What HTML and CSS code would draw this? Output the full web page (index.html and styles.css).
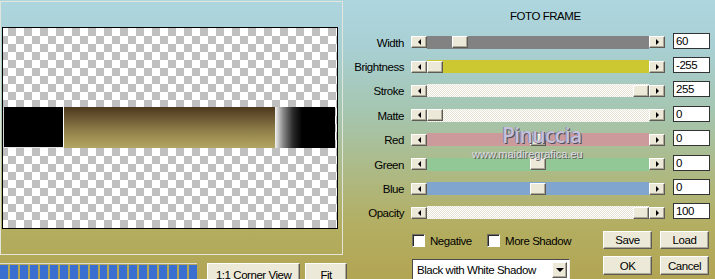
FILE: index.html
```html
<!DOCTYPE html>
<html>
<head>
    <title>Foto Frame</title>
    <link rel="stylesheet" href="styles.css">
</head>
<body>
    <div class="dialog">
        <div class="left">
            <div class="preview-frame">
                <div class="preview">
                    <div class="strip">
                        <div class="strip-black"></div>
                        <div class="strip-brown"></div>
                        <div class="strip-fade"></div>
                    </div>
                </div>
            </div>
            <div class="left-bottom">
                <div class="progress">
                    <span></span><span></span><span></span><span></span><span></span>
                    <span></span><span></span><span></span><span></span><span></span>
                    <span></span><span></span><span></span><span></span><span></span>
                    <span></span><span></span><span></span><span></span><span></span>
                </div>
                <button class="btn corner">1:1 Corner View</button>
                <button class="btn fit">Fit</button>
            </div>
        </div>

        <div class="right">
            <div class="title">FOTO FRAME</div>

            <div class="rows">
                <div class="row">
                    <span class="label">Width</span>
                    <div class="slider">
                        <span class="arrow"><i class="tri-left"></i></span>
                        <span class="track gray"><span class="thumb" style="margin-left:25px"></span></span>
                        <span class="arrow"><i class="tri-right"></i></span>
                    </div>
                    <input class="value" type="text" value="60">
                </div>
                <div class="row">
                    <span class="label">Brightness</span>
                    <div class="slider">
                        <span class="arrow"><i class="tri-left"></i></span>
                        <span class="track yellow"><span class="thumb" style="margin-left:0"></span></span>
                        <span class="arrow"><i class="tri-right"></i></span>
                    </div>
                    <input class="value" type="text" value="-255">
                </div>
                <div class="row">
                    <span class="label">Stroke</span>
                    <div class="slider">
                        <span class="arrow"><i class="tri-left"></i></span>
                        <span class="track light"><span class="thumb" style="margin-left:206px"></span></span>
                        <span class="arrow"><i class="tri-right"></i></span>
                    </div>
                    <input class="value" type="text" value="255">
                </div>
                <div class="row">
                    <span class="label">Matte</span>
                    <div class="slider">
                        <span class="arrow"><i class="tri-left"></i></span>
                        <span class="track light"><span class="thumb" style="margin-left:0"></span></span>
                        <span class="arrow"><i class="tri-right"></i></span>
                    </div>
                    <input class="value" type="text" value="0">
                </div>
                <div class="row">
                    <span class="label">Red</span>
                    <div class="slider">
                        <span class="arrow"><i class="tri-left"></i></span>
                        <span class="track red"><span class="thumb" style="margin-left:103px"></span></span>
                        <span class="arrow"><i class="tri-right"></i></span>
                    </div>
                    <input class="value" type="text" value="0">
                </div>
                <div class="row">
                    <span class="label">Green</span>
                    <div class="slider">
                        <span class="arrow"><i class="tri-left"></i></span>
                        <span class="track green"><span class="thumb" style="margin-left:103px"></span></span>
                        <span class="arrow"><i class="tri-right"></i></span>
                    </div>
                    <input class="value" type="text" value="0">
                </div>
                <div class="row">
                    <span class="label">Blue</span>
                    <div class="slider">
                        <span class="arrow"><i class="tri-left"></i></span>
                        <span class="track blue"><span class="thumb" style="margin-left:103px"></span></span>
                        <span class="arrow"><i class="tri-right"></i></span>
                    </div>
                    <input class="value" type="text" value="0">
                </div>
                <div class="row">
                    <span class="label">Opacity</span>
                    <div class="slider">
                        <span class="arrow"><i class="tri-left"></i></span>
                        <span class="track light"><span class="thumb" style="margin-left:206px"></span></span>
                        <span class="arrow"><i class="tri-right"></i></span>
                    </div>
                    <input class="value" type="text" value="100">
                </div>
            </div>

            <div class="bottom">
                <div class="checks">
                    <label class="check first"><span class="box"></span>Negative</label>
                    <label class="check"><span class="box"></span>More Shadow</label>
                </div>
                <div class="btn-pair top-pair">
                    <button class="btn">Save</button>
                    <button class="btn">Load</button>
                </div>
                <div class="select">
                    <span class="select-text">Black with White Shadow</span>
                    <span class="drop"><i class="tri-down"></i></span>
                </div>
                <div class="btn-pair">
                    <button class="btn tall">OK</button>
                    <button class="btn tall">Cancel</button>
                </div>
            </div>
        </div>

        <!-- watermark of the screenshot -->
        <div class="mark-name">Pinuccia</div>
        <div class="mark-site">www.maidiregrafica.eu</div>
    </div>
</body>
</html>
```

FILE: styles.css
```css
* {
    box-sizing: border-box;
}

html, body {
    margin: 0;
    height: 279px;
    overflow: hidden;
}

body {
    font-family: 'Liberation Sans', Arial, sans-serif;
    font-size: 11.5px;
    letter-spacing: -0.45px;
    color: #000;
    background: linear-gradient(#aed6df 0, #a8cfd2 50px, #a5c5ae 115px, #adba86 170px, #b3ae62 225px, #b2a553 279px);
}

.dialog {
    position: relative;
    display: flex;
    width: 715px;
    height: 279px;
}

/* preview side */
.left {
    width: 347px;
    flex: none;
}

.preview-frame {
    width: 343px;
    height: 254px;
    margin-top: 1px;
    border: 1px solid #e2e5dc;
    padding: 25px 4px 25px 1px;
}

.preview {
    width: 336px;
    height: 202px;
    border: 1px solid #000;
    background-color: #fff;
    background-image: conic-gradient(#c0c0c0 0 25%, #fff 0 50%, #c0c0c0 0 75%, #fff 0);
    background-size: 16px 16px;
    background-position: -3px 0;
}

.strip {
    display: flex;
    height: 41px;
    margin-top: 79px;
}

.strip-black {
    width: 61px;
    background: #000;
    border-left: 1px solid #d4d4d4;
    border-right: 1px solid #fff;
    border-bottom: 1px solid #e4e4e4;
}

.strip-brown {
    width: 211px;
    background: linear-gradient(#4c381c, #6a5632 25%, #8c7c48 55%, #a89958 85%, #b1a465);
}

.strip-fade {
    width: 60px;
    background: linear-gradient(90deg, #f2f2f2, #8a8a8a 8px, #2a2a2a 18px, #000 27px, #000);
}

.left-bottom {
    display: flex;
    align-items: flex-start;
    margin-top: 8px;
}

.progress {
    display: flex;
    gap: 2px;
    width: 197px;
    height: 17px;
    padding-top: 1px;
    border-top: 1px solid #dcdcd2;
}

.progress span {
    width: 8px;
    height: 15px;
    background: #3a6fcf;
}

.btn {
    font-family: inherit;
    font-size: 11.5px;
    letter-spacing: -0.45px;
    color: #000;
    background: #ece9d8;
    border: 1px solid;
    border-color: #fff #5e5c52 #5e5c52 #fff;
    box-shadow: inset -1px -1px #aca899;
    padding: 0;
    margin: 0;
}

.corner {
    width: 94px;
    height: 23px;
    margin-left: 10px;
}

.fit {
    width: 42px;
    height: 23px;
    margin-left: 5px;
}

/* settings side */
.right {
    flex: 1;
}

.title {
    height: 23px;
    padding-top: 10px;
    padding-left: 163px;
    line-height: 13px;
}

.rows {
    margin-top: 7px;
}

.row {
    display: flex;
    align-items: center;
    height: 24.4px;
}

.label {
    width: 57px;
    margin-right: 7px;
    text-align: right;
    line-height: 13px;
    padding-top: 2px;
    white-space: nowrap;
}

.slider {
    display: flex;
    align-items: center;
    width: 254px;
    height: 13px;
}

.arrow {
    display: flex;
    align-items: center;
    justify-content: center;
    width: 16px;
    height: 12px;
    background: #ece9d8;
    border: 1px solid;
    border-color: #fff #5e5c52 #5e5c52 #fff;
    box-shadow: inset -1px -1px #aca899;
}

.tri-left {
    border-top: 3px solid transparent;
    border-bottom: 3px solid transparent;
    border-right: 3px solid #000;
}

.tri-right {
    border-top: 3px solid transparent;
    border-bottom: 3px solid transparent;
    border-left: 3px solid #000;
}

.tri-down {
    border-left: 4px solid transparent;
    border-right: 4px solid transparent;
    border-top: 4px solid #000;
}

.track {
    display: flex;
    align-items: center;
    flex: 1;
    height: 13px;
}

.track.gray { background: #828282; }
.track.yellow { background: #cbc831; }
.track.red { background: #cc9a9a; }
.track.green { background: #92c896; }
.track.blue { background: #80a6cf; }
.track.light {
    background: repeating-conic-gradient(#fff 0 25%, #e6e3d4 0 50%) 0 0 / 2px 2px;
}

.thumb {
    width: 16px;
    height: 12px;
    background: #ece9d8;
    border: 1px solid;
    border-color: #fff #5e5c52 #5e5c52 #fff;
    box-shadow: inset -1px -1px #aca899;
}

.value {
    width: 37px;
    height: 16px;
    margin: 0 0 3px 8px;
    padding: 0 0 0 2px;
    border: 1px solid #333;
    background: #fff;
    font-family: inherit;
    font-size: 11.5px;
    letter-spacing: -0.45px;
    color: #000;
    outline: none;
}

.bottom {
    display: grid;
    grid-template-columns: 191px 106px;
    grid-template-rows: 19px 23px;
    row-gap: 6px;
    margin: 6px 0 0 65px;
}

.checks {
    display: flex;
    align-items: center;
}

.check {
    display: flex;
    align-items: center;
    gap: 5px;
}

.check.first {
    width: 75px;
}

.box {
    width: 13px;
    height: 13px;
    background: #fff;
    border: 1px solid;
    border-color: #6f6d64 #fff #fff #6f6d64;
    box-shadow: inset 1px 1px #2a2a2a;
}

.btn-pair {
    display: flex;
    gap: 8px;
    align-items: flex-start;
}

.btn-pair .btn {
    width: 49px;
    height: 18px;
}

.btn-pair .btn.tall {
    height: 19px;
}

.select {
    display: flex;
    align-items: center;
    justify-content: space-between;
    width: 158px;
    height: 21px;
    margin-top: 3px;
    padding: 0 2px 0 4px;
    background: #fff;
    border: 1px solid;
    border-color: #4a4a4a #eaeaea #eaeaea #4a4a4a;
}

.drop {
    display: flex;
    align-items: center;
    justify-content: center;
    width: 15px;
    height: 16px;
    background: #ece9d8;
    border: 1px solid;
    border-color: #fff #5e5c52 #5e5c52 #fff;
    box-shadow: inset -1px -1px #aca899;
}

/* watermark over the dialog */
.mark-name {
    position: absolute;
    left: 502px;
    top: 124px;
    font-family: 'Open Sans', 'Liberation Sans', sans-serif;
    font-size: 21px;
    font-weight: 600;
    line-height: 22px;
    letter-spacing: -0.6px;
    color: #c5c1dc;
    text-shadow: 1px 1px 0 #4e4e5e, -1px 0 0 #8a8aa0;
}

.mark-site {
    position: absolute;
    left: 472px;
    top: 149px;
    font-size: 11px;
    line-height: 11px;
    letter-spacing: 0;
    color: #dcdce4;
    text-shadow: 1px 1px 0 #5a5a5a;
}
```
